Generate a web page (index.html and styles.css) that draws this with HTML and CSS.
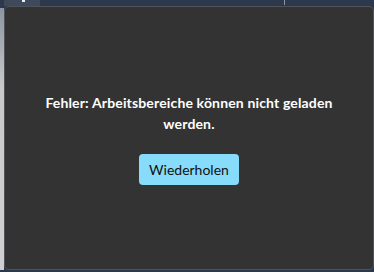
FILE: index.html
```html
<!DOCTYPE html>
<html lang="de">
<head>
    <meta charset="UTF-8">
    <meta name="viewport" content="width=device-width, initial-scale=1.0">
    <title>Arbeitsbereiche</title>
    <link rel="stylesheet" href="styles.css">
</head>
<body>
    <div class="topbar">
        <div class="tab active"><span class="dot"></span></div>
        <div class="tab-sep"></div>
    </div>
    <div class="main">
        <div class="side-edge"></div>
        <div class="panel">
            <div class="error-box">
                <p class="error-text">Fehler: Arbeitsbereiche können nicht geladen werden.</p>
                <button type="button" class="retry-button">Wiederholen</button>
            </div>
        </div>
    </div>
</body>
</html>
```

FILE: styles.css
```css
html, body {
    margin: 0;
    padding: 0;
    height: 100%;
}
body {
    font-family: 'Lato', 'Open Sans', sans-serif;
    background-color: #2c394c;
    display: flex;
    flex-direction: column;
    overflow: hidden;
}
.topbar {
    height: 6px;
    display: flex;
    position: relative;
    background-color: #2c394c;
}
.tab.active {
    width: 36px;
    margin-left: 4px;
    background-color: #3e4a5b;
    position: relative;
}
.dot {
    position: absolute;
    left: 18px;
    top: 0;
    width: 3px;
    height: 2px;
    background: #f0f0f0;
}
.tab-sep {
    position: absolute;
    left: 284px;
    top: 0;
    width: 1px;
    height: 5px;
    background: #8a96a6;
}
.main {
    flex: 1;
    display: flex;
    padding-bottom: 2px;
}
.side-edge {
    width: 4px;
    margin-top: 2px;
    background: linear-gradient(#8d95a0, #c9c9c9 30%, #d0d0d0);
}
.panel {
    flex: 1;
    background-color: #333333;
    border: 1px solid #505357;
    border-radius: 5px;
    display: flex;
    align-items: center;
    justify-content: center;
}
.error-box {
    text-align: center;
    padding: 0 30px;
}
.error-text {
    color: #ffffff;
    font-weight: 700;
    font-size: 14px;
    letter-spacing: 0.15px;
    line-height: 21px;
    margin: 0 0 20px 0;
}
.retry-button {
    background-color: #87dcfb;
    color: #111111;
    border: none;
    border-radius: 4px;
    font-family: 'Lato', 'Open Sans', sans-serif;
    font-size: 14px;
    width: 100px;
    height: 31px;
    padding: 0;
    cursor: pointer;
}
```
